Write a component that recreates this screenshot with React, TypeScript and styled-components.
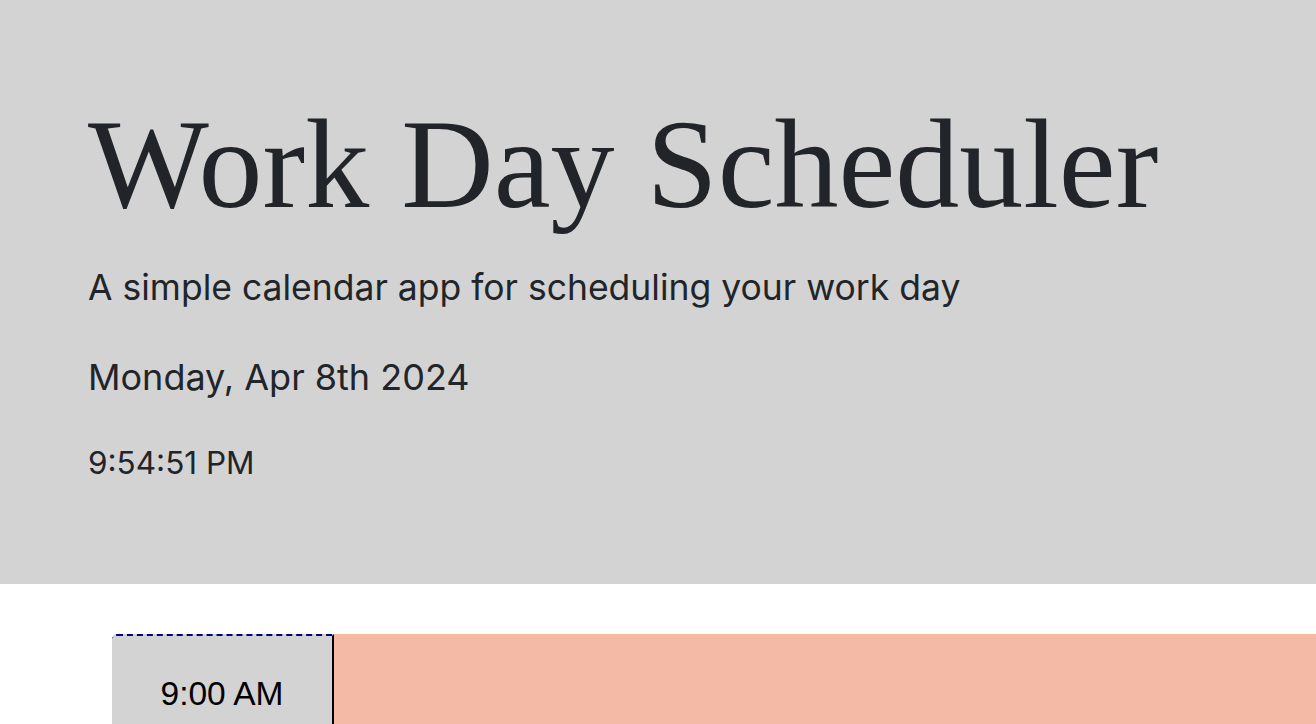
import React from "react";
import styled, { createGlobalStyle } from "styled-components";

const GlobalStyle = createGlobalStyle`
  html, body {
    margin: 0;
    padding: 0;
    overflow: hidden;
    background: #ffffff;
  }
  body {
    font-family: Inter, "Liberation Sans", sans-serif;
    color: #212529;
  }
`;

const hours = ["9:00 AM", "10:00 AM", "11:00 AM"];

const App: React.FC = () => {
  return (
    <>
      <GlobalStyle />
      <Jumbotron>
        <Title>Work Day Scheduler</Title>
        <Lead>A simple calendar app for scheduling your work day</Lead>
        <DateLine>Monday, Apr 8th 2024</DateLine>
        <Clock>9:54:51 PM</Clock>
      </Jumbotron>
      <Container>
        {hours.map((hour) => (
          <TimeBlock key={hour}>
            <Hour>
              <span>{hour}</span>
            </Hour>
            <Description />
          </TimeBlock>
        ))}
      </Container>
    </>
  );
};

const Jumbotron = styled.header`
  background-color: #d3d3d3;
  height: 584px;
  padding: 88px 0 0 88px;
  box-sizing: border-box;
  display: flex;
  flex-direction: column;
  align-items: flex-start;
`;

const Title = styled.h1`
  font-family: "Liberation Serif", "DejaVu Serif", serif;
  font-weight: 400;
  font-size: 128px;
  line-height: 1.2;
  margin: 0;
  white-space: nowrap;
`;

const Lead = styled.p`
  font-size: 35.5px;
  font-weight: 400;
  margin: 25px 0 0;
  line-height: 1.2;
  white-space: nowrap;
`;

const DateLine = styled.p`
  font-size: 36px;
  margin: 47px 0 0;
  line-height: 1.2;
`;

const Clock = styled.p`
  font-size: 31.5px;
  margin: 45px 0 0;
  line-height: 1.2;
`;

const Container = styled.main`
  padding: 50px 0 0 112px;
  width: 1500px;
`;

const TimeBlock = styled.div`
  display: flex;
  height: 120px;
`;

const Hour = styled.div`
  width: 222px;
  flex-shrink: 0;
  background: #d3d3d3;
  border-top: 2px dashed #000080;
  border-right: 2px solid #000000;
  border-top-left-radius: 5px;
  font-family: "Liberation Sans", Arial, sans-serif;
  font-size: 33.5px;
  color: #000000;
  display: flex;
  justify-content: center;
  align-items: flex-start;
  padding-top: 39px;
  box-sizing: border-box;
`;

const Description = styled.textarea`
  flex: 1;
  border: none;
  background: #f5baa5;
  resize: none;
  margin: 0;
`;

export default App;
